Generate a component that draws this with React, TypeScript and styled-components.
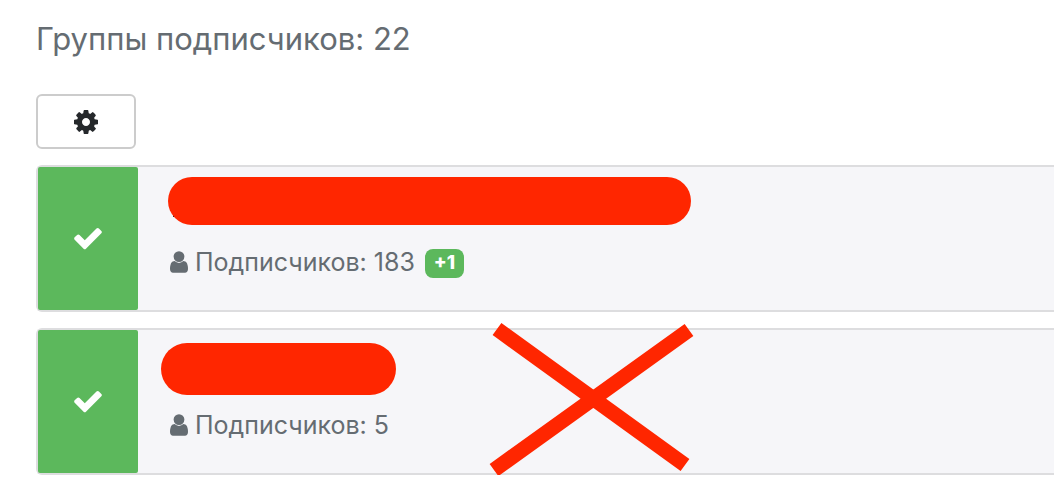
import React from "react";
import styled, { createGlobalStyle } from "styled-components";

const GlobalStyle = createGlobalStyle`
  * { box-sizing: border-box; }
  body {
    margin: 0;
    background: #ffffff;
    color: #656c72;
    font-family: Inter, "Liberation Sans", sans-serif;
    overflow-x: hidden;
  }
`;

const Page = styled.main`
  display: flex;
  flex-direction: column;
  padding: 15px 0 0 36px;
`;

const Heading = styled.h1`
  margin: 0 0 31px;
  font-size: 31px;
  line-height: 48px;
  font-weight: 400;
`;

const SettingsButton = styled.button`
  display: flex;
  align-items: center;
  justify-content: center;
  width: 100px;
  height: 55px;
  margin: 0 0 16px;
  padding: 0;
  color: #25282b;
  background: #ffffff;
  border: 2px solid #cccccc;
  border-radius: 6px;
`;

const GroupList = styled.ul`
  display: flex;
  flex-direction: column;
  gap: 16px;
  margin: 0;
  padding: 0;
  list-style: none;
`;

const GroupCard = styled.li`
  position: relative;
  display: flex;
  min-height: 147px;
  background: #f6f6f9;
  border: 2px solid #dddddf;
  border-right: 0;
  border-radius: 6px 0 0 6px;
`;

const Toggle = styled.button`
  display: flex;
  flex: 0 0 100px;
  align-items: center;
  justify-content: center;
  padding: 0 0 2px;
  color: #ffffff;
  background: #5cb85c;
  border: 0;
  border-radius: 2px;
`;

const Details = styled.div`
  flex: 1;
  padding: 16px 32px;
`;

const Title = styled.div`
  position: relative;
  height: 63px;
`;

const Redaction = styled.span<{ $x: number; $y: number; $w: number; $h: number }>`
  position: absolute;
  left: ${(p) => p.$x}px;
  top: ${(p) => p.$y}px;
  width: ${(p) => p.$w}px;
  height: ${(p) => p.$h}px;
  background: #ff2600;
  border-radius: 26px;
`;

const TitleTrace = styled.span`
  position: absolute;
  left: 3px;
  top: 31px;
  width: 3px;
  height: 3px;
  background: #25282b;
`;

const Meta = styled.div`
  display: flex;
  align-items: center;
  height: 32px;
  font-size: 25px;
  line-height: 32px;
  white-space: pre;
`;

const MetaLabel = styled.span`
  margin-left: 7px;
`;

const Badge = styled.span`
  display: flex;
  align-items: center;
  justify-content: center;
  width: 39px;
  height: 29px;
  margin: 2px 0 0 10px;
  color: #ffffff;
  background: #5cb85c;
  border-radius: 8px;
  font-size: 19px;
  font-weight: 800;
`;

const CrossOut = styled.svg`
  position: absolute;
  left: 450px;
  top: -10px;
  pointer-events: none;
`;

const GearIcon = () => (
  <svg width="28" height="28" viewBox="0 0 1792 1792" fill="currentColor" aria-hidden="true">
    <path d="M1152 896q0-106-75-181t-181-75-181 75-75 181 75 181 181 75 181-75 75-181zm512-109v222q0 12-8 23t-20 13l-185 28q-19 54-39 91 35 50 107 138 10 12 10 25t-9 23q-27 37-99 108t-94 71q-12 0-26-9l-138-108q-44 23-91 38-16 136-29 186-7 28-36 28h-222q-14 0-24.500-8.500t-11.500-21.500l-28-184q-49-16-90-37l-141 107q-10 9-25 9-14 0-25-11-126-114-165-168-7-10-7-23 0-12 8-23 15-21 51-66.500t54-70.500q-27-50-41-99l-183-27q-13-2-21-12.500t-8-23.500v-222q0-12 8-23t19-13l186-28q14-46 39-92-40-57-107-138-10-12-10-24 0-10 9-23 26-36 98.500-107.500t94.500-71.500q13 0 26 10l138 107q44-23 91-38 16-136 29-186 7-28 36-28h222q14 0 24.500 8.500t11.500 21.500l28 184q49 16 90 37l142-107q9-9 24-9 13 0 25 10 129 119 165 170 7 8 7 22 0 12-8 23-15 21-51 66.500t-54 70.500q26 50 41 98l183 28q13 2 21 12.500t8 23.500z" />
  </svg>
);

const CheckIcon = () => (
  <svg width="32" height="32" viewBox="0 0 1792 1792" fill="currentColor" aria-hidden="true">
    <path d="M1671 566q0 40-28 68l-724 724-136 136q-28 28-68 28t-68-28l-136-136-362-362q-28-28-28-68t28-68l136-136q28-28 68-28t68 28l294 295 656-657q28-28 68-28t68 28l136 136q28 28 28 68z" />
  </svg>
);

const UserIcon = () => (
  <svg width="18" height="26" viewBox="256 0 1280 1792" fill="currentColor" aria-hidden="true">
    <path d="M1536 1399q0 109-62.500 187t-150.500 78h-854q-88 0-150.500-78t-62.500-187q0-85 8.500-160.500t31.500-152 58.500-131 94-89 134.500-34.500q131 128 313 128t313-128q76 0 134.500 34.500t94 89 58.500 131 31.500 152 8.500 160.500zm-256-887q0 159-112.500 271.500t-271.500 112.500-271.500-112.500-112.500-271.500 112.500-271.500 271.500-112.500 271.500 112.500 112.500 271.500z" />
  </svg>
);

type Group = {
  id: number;
  subscribers: number;
  gained?: number;
  mark: { x: number; y: number; w: number; h: number };
  trace?: boolean;
  crossed?: boolean;
};

const groups: Group[] = [
  { id: 1, subscribers: 183, gained: 1, mark: { x: -2, y: -6, w: 523, h: 48 }, trace: true },
  { id: 2, subscribers: 5, mark: { x: -9, y: -3, w: 235, h: 52 }, crossed: true },
];

export default function App() {
  return (
    <>
      <GlobalStyle />
      <Page>
        <Heading>Группы подписчиков: 22</Heading>
        <SettingsButton type="button" aria-label="Настройки">
          <GearIcon />
        </SettingsButton>
        <GroupList>
          {groups.map((g) => (
            <GroupCard key={g.id}>
              <Toggle type="button" aria-label="Выбрать группу" aria-pressed="true">
                <CheckIcon />
              </Toggle>
              <Details>
                <Title>
                  {g.trace && <TitleTrace />}
                  <Redaction $x={g.mark.x} $y={g.mark.y} $w={g.mark.w} $h={g.mark.h} />
                </Title>
                <Meta>
                  <UserIcon />
                  <MetaLabel>Подписчиков: {g.subscribers}</MetaLabel>
                  {g.gained && <Badge>+{g.gained}</Badge>}
                </Meta>
              </Details>
              {g.crossed && (
                <CrossOut width="210" height="160" viewBox="0 0 210 160" aria-hidden="true">
                  <path d="M9 9L197 145M6 150L201 10" stroke="#ff2600" strokeWidth="15" fill="none" />
                </CrossOut>
              )}
            </GroupCard>
          ))}
        </GroupList>
      </Page>
    </>
  );
}
